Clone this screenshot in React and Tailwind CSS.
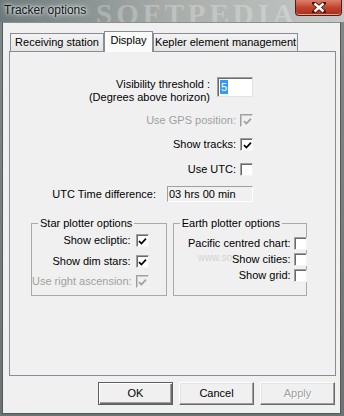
import React from 'react';

const CheckBox = ({ checked, disabled, className = '' }) => (
    <span
        className={`flex h-[13px] w-[13px] shrink-0 items-center justify-center border border-t-[#a0a0a0] border-l-[#a0a0a0] border-b-[#f4f4f4] border-r-[#f4f4f4] ${
            disabled ? 'bg-[#f0f0f0] shadow-[inset_1px_1px_0_#c8c8c8]' : 'bg-white shadow-[inset_1px_1px_0_#696969]'
        } ${className}`}
    >
        {checked && (
            <svg width="9" height="9" viewBox="0 0 9 9" className="ml-[1px] mt-[1px]">
                <path d="M1 4.2 L3.4 6.6 L8 1.6" fill="none" stroke={disabled ? '#a0a0a0' : '#000'} strokeWidth="1.7" />
            </svg>
        )}
    </span>
);

const OptionRow = ({ label, checked, disabled, gap = 'gap-[4px]' }) => (
    <div className={`flex h-[13px] items-center justify-end whitespace-nowrap ${gap}`}>
        <span className={`bg-[#f0f0f0] leading-[13px] ${disabled ? 'text-[#a0a0a0]' : 'text-black'}`}>{label}</span>
        <CheckBox checked={checked} disabled={disabled} />
    </div>
);

const Tab = ({ label, selected, width }) => (
    <div
        className={`flex items-center justify-center whitespace-nowrap border border-b-0 border-[#898c95] leading-[13px] ${width} ${
            selected ? 'relative z-10 -mb-px h-[21px] bg-[#fbfbfb] pb-[3px]' : 'h-[18px] bg-gradient-to-b from-[#f3f3f3] to-[#e4e4e4]'
        }`}
    >
        {label}
    </div>
);

const DialogButton = ({ label, isDefault, disabled }) => (
    <button
        type="button"
        className={`flex h-[23px] w-[75px] items-center justify-center bg-[#f0f0f0] leading-[13px] ${
            isDefault
                ? 'border border-[#5e5e5e] shadow-[inset_1px_1px_0_#ffffff,inset_-1px_-1px_0_#696969,inset_-2px_-2px_0_#a0a0a0]'
                : 'border border-t-white border-l-white border-r-[#696969] border-b-[#696969] shadow-[inset_-1px_-1px_0_#a0a0a0,inset_1px_1px_0_#e3e3e3]'
        } ${disabled ? 'text-[#a0a0a0] [text-shadow:1px_1px_0_#ffffff]' : 'text-black'}`}
    >
        {label}
    </button>
);

export default function App() {
    return (
        <div className="h-[416px] w-[344px] overflow-hidden bg-gradient-to-b from-[#7e8a8a] to-[#6a7474] font-['Liberation_Sans',Arial,sans-serif] text-[11px] text-black">
            {/* title bar */}
            <div className="relative flex h-[22px] items-start justify-between overflow-hidden bg-gradient-to-r from-[#6d7a7b] via-[#a9adaa] to-[#c3c9c8]">
                <span className="pointer-events-none absolute left-[96px] top-[-7px] font-['Liberation_Serif',serif] text-[29px] font-bold tracking-[4px] text-white/25">
                    SOFTPEDIA
                </span>
                <span className="relative ml-[4px] mt-[3px] text-[12px] leading-[15px] text-[#10161a] [text-shadow:0_0_6px_#ffffff,0_0_3px_#ffffff]">
                    Tracker options
                </span>
                <div className="relative mr-[2px] flex h-[16px] w-[47px] items-center justify-center rounded-b-[4px] border border-t-0 border-[#5b1a12] bg-gradient-to-b from-[#d9806c] via-[#c4432c] to-[#a3301d] shadow-[inset_0_-1px_0_#e9a08f]">
                    <svg width="14" height="11" viewBox="0 0 14 11" className="-mt-[1px]">
                        <path d="M2 1 L12 10 M12 1 L2 10" stroke="#4a1008" strokeWidth="4.2" strokeLinecap="square" />
                        <path d="M2.5 1.5 L11.5 9.5 M11.5 1.5 L2.5 9.5" stroke="#ffffff" strokeWidth="2.4" />
                    </svg>
                </div>
            </div>

            {/* client area */}
            <div className="ml-[2px] h-[392px] w-[339px] border border-[#55595a] border-t-[#8a9191] bg-[#f0f0f0]">
                <div className="flex items-end pl-[7px] pt-[8px]">
                    <Tab label="Receiving station" width="w-[94px]" />
                    <Tab label="Display" width="w-[49px]" selected />
                    <Tab label="Kepler element management" width="w-[145px]" />
                </div>

                <div className="relative ml-[6px] h-[325px] w-[327px] border border-[#898c95] bg-[#f0f0f0]">
                    <div className="flex flex-col items-end pr-[82px] pt-[25px]">
                        <div className="flex items-start gap-[7px]">
                            <div className="mt-[1px] whitespace-nowrap text-right leading-[13px]">
                                <div>Visibility threshold :</div>
                                <div>(Degrees above horizon)</div>
                            </div>
                            <div className="flex h-[20px] w-[36px] items-center border border-t-[#a0a0a0] border-l-[#a0a0a0] border-b-[#e3e3e3] border-r-[#e3e3e3] bg-white pl-[2px] shadow-[inset_1px_1px_0_#696969]">
                                <span className="bg-[#3399ff] px-[1px] leading-[14px] text-white">5</span>
                            </div>
                        </div>
                        <div className="mt-[10px]">
                            <OptionRow label="Use GPS position:" checked disabled />
                        </div>
                        <div className="mt-[11px]">
                            <OptionRow label="Show tracks:" checked />
                        </div>
                        <div className="mt-[12px]">
                            <OptionRow label="Use UTC:" />
                        </div>
                        <div className="mt-[10px] flex items-center gap-[11px] whitespace-nowrap">
                            <span className="leading-[13px]">UTC Time difference:</span>
                            <div className="flex h-[16px] w-[86px] items-center border border-t-[#a0a0a0] border-l-[#a0a0a0] border-b-white border-r-white bg-[#f0f0f0] pl-[1px] leading-[13px]">
                                03 hrs 00 min
                            </div>
                        </div>
                    </div>

                    <div className="mt-[15px] flex gap-[6px] pl-[21px]">
                        <fieldset className="h-[79px] w-[135px] border border-[#a9a9a9]">
                            <legend className="ml-[6px] whitespace-nowrap px-[2px] leading-[13px]">Star plotter options</legend>
                            <div className="flex flex-col items-end pr-[17px] pt-[4px]">
                                <OptionRow label="Show ecliptic:" checked gap="gap-[5px]" />
                                <div className="mt-[8px]">
                                    <OptionRow label="Show dim stars:" checked gap="gap-[5px]" />
                                </div>
                                <div className="mt-[7px]">
                                    <OptionRow label="Use right ascension:" checked disabled gap="gap-[4px]" />
                                </div>
                            </div>
                        </fieldset>
                        <fieldset className="relative h-[79px] w-[134px] border border-[#a9a9a9]">
                            <legend className="ml-[6px] whitespace-nowrap px-[2px] leading-[13px]">Earth plotter options</legend>
                            <span className="pointer-events-none absolute left-[24px] top-[22px] whitespace-nowrap text-[10px] leading-[12px] text-[#d4d4d4]">
                                www.softpedia.com
                            </span>
                            <div className="relative -mr-[1px] flex flex-col items-end pt-[7px]">
                                <OptionRow label="Pacific centred chart:" gap="gap-[3px]" />
                                <div className="mt-[3px]">
                                    <OptionRow label="Show cities:" gap="gap-[3px]" />
                                </div>
                                <div className="mt-[3px]">
                                    <OptionRow label="Show grid:" gap="gap-[3px]" />
                                </div>
                            </div>
                        </fieldset>
                    </div>
                </div>

                <div className="ml-[6px] mt-[6px] flex w-[327px] justify-end gap-[6px] pr-[1px]">
                    <DialogButton label="OK" isDefault />
                    <DialogButton label="Cancel" />
                    <DialogButton label="Apply" disabled />
                </div>
            </div>
        </div>
    );
}
